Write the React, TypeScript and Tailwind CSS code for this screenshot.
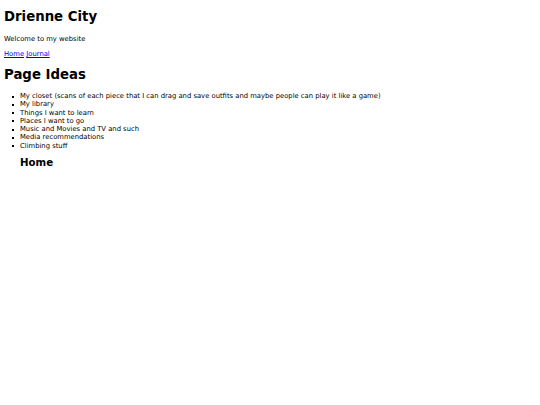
export default function App() {
  const ideas = [
    'My closet (scans of each piece that I can drag and save outfits and maybe people can play it like a game)',
    'My library',
    'Things I want to learn',
    'Places I want to go',
    'Music and Movies and TV and such',
    'Media recommendations',
    'Climbing stuff',
  ];

  return (
    <div className="min-h-[405px] bg-white px-[4px] pt-px text-black" style={{ fontFamily: '"DejaVu Sans", Verdana, sans-serif' }}>
      <h1 className="mt-[8px] text-[13.3px] font-bold leading-[16px]">Drienne City</h1>
      <p className="mt-[10px] text-[6.8px] leading-[8px]">Welcome to my website</p>
      <p className="mt-[7px] text-[6.8px] leading-[8px]">
        <a href="#" className="text-[#0000ee] underline">Home</a>{' '}
        <a href="#" className="text-[#0000ee] underline">Journal</a>
      </p>
      <h1 className="mt-[9px] text-[13.3px] font-bold leading-[16px]">Page Ideas</h1>
      <ul className="mt-[9px] pl-[16px] text-[6.8px] leading-[8.3px]">
        {ideas.map((idea) => (
          <li key={idea} className="relative">
            <span className="absolute left-[-8px] top-[3.5px] h-[2px] w-[2px] bg-black" />
            {idea}
          </li>
        ))}
      </ul>
      <div className="pl-[16px]">
        <h2 className="mt-[7px] text-[10.2px] font-bold leading-[12px]">Home</h2>
      </div>
    </div>
  );
}
